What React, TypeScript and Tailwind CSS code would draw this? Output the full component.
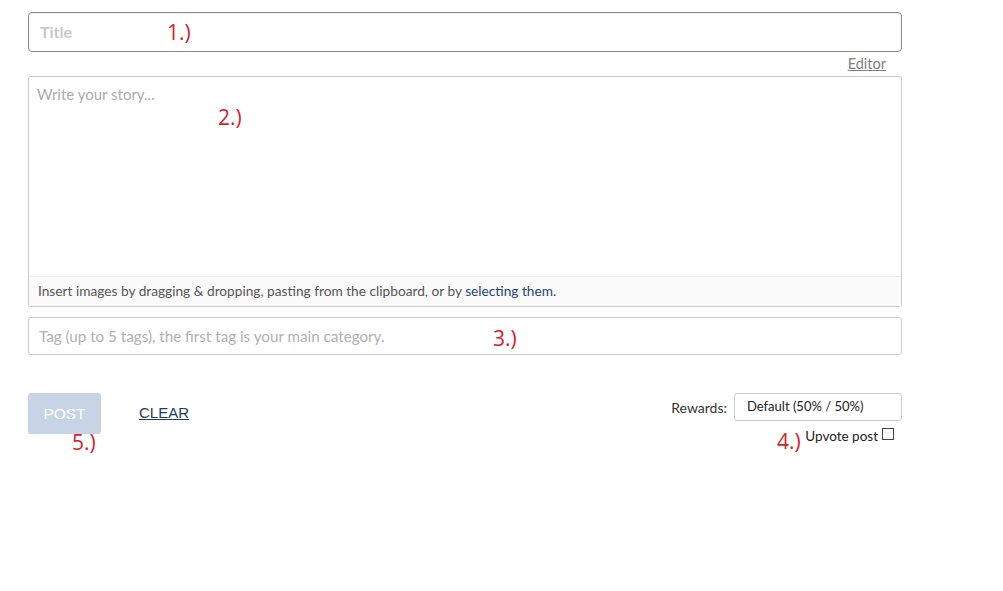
import React from "react";

function Mark({ label, className }: { label: string; className: string }) {
  return (
    <span
      className={`absolute text-[21px] leading-none text-[#d3222a] ${className}`}
      style={{ fontFamily: "'Open Sans', sans-serif" }}
    >
      {label}
    </span>
  );
}

export default function App() {
  return (
    <div className="relative w-[1003px] h-[591px] bg-white" style={{ fontFamily: "Lato, 'Noto Sans', sans-serif" }}>
      <div className="w-[874px] ml-[28px] pt-[12px] flex flex-col">
        <div className="h-[40px] border border-[#8a8a8a] rounded-[4px] flex items-center px-[11px] shadow-[inset_0_1px_2px_rgba(0,0,0,0.08)]">
          <span className="text-[16px] font-bold text-[#c8c8c8]">Title</span>
        </div>

        <div className="h-[24px] flex items-center justify-end pr-[16px]">
          <span className="text-[14.5px] text-[#808080] underline">Editor</span>
        </div>

        <div className="h-[231px] border border-[#cccccc] rounded-[3px] flex flex-col">
          <div className="flex-1 px-[8px] pt-[5px]">
            <span className="text-[15px] text-[#acacac]">Write your story...</span>
          </div>
          <div className="h-[30px] border-t border-[#eeeeee] bg-[#fafafa] flex items-center px-[9px]">
            <span className="text-[13.7px] text-[#555555]">
              Insert images by dragging &amp; dropping, pasting from the clipboard, or by{" "}
              <span className="text-[#1c4673]">selecting them.</span>
            </span>
          </div>
        </div>

        <div className="mt-[10px] h-[38px] border border-[#cccccc] rounded-[3px] flex items-center px-[10px]">
          <span className="text-[15.2px] text-[#b0b0b0]">Tag (up to 5 tags), the first tag is your main category.</span>
        </div>

        <div className="mt-[38px] flex items-start justify-between">
          <div className="flex items-center" style={{ fontFamily: "'Liberation Sans', Arial, sans-serif" }}>
            <div className="w-[73px] h-[41px] rounded-[3px] bg-[#c6d4e6] flex items-center justify-center text-[15.5px] text-white">
              POST
            </div>
            <span className="ml-[38px] text-[15px] text-[#1b3d5e] underline">CLEAR</span>
          </div>
          <div className="flex flex-col items-end">
            <div className="flex items-center">
              <span className="text-[14px] text-[#333333] mr-[7px]">Rewards:</span>
              <div className="w-[168px] h-[28px] border border-[#cccccc] rounded-[3px] flex items-center px-[12px] text-[13px] text-[#222222]">
                Default (50% / 50%)
              </div>
            </div>
            <div className="flex items-center mt-[5px] pr-[8px]">
              <span className="text-[13.5px] text-[#222222] mr-[4px]">Upvote post</span>
              <span className="w-[12px] h-[12px] border border-[#444444] bg-white inline-block -mt-[4px]"></span>
            </div>
          </div>
        </div>
      </div>

      <Mark label="1.)" className="left-[167px] top-[22px]" />
      <Mark label="2.)" className="left-[218px] top-[107px]" />
      <Mark label="3.)" className="left-[493px] top-[328px]" />
      <Mark label="4.)" className="left-[777px] top-[431px]" />
      <Mark label="5.)" className="left-[72px] top-[432px]" />
    </div>
  );
}
